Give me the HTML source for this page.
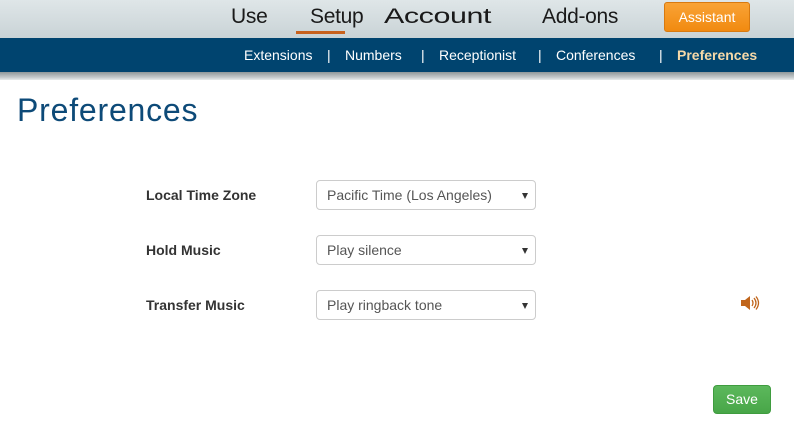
<!DOCTYPE html>
<html><head><meta charset="utf-8"><style>
*{margin:0;padding:0;box-sizing:border-box}
body{width:794px;height:434px;overflow:hidden;background:#fff;font-family:"Liberation Sans",sans-serif;position:relative}
.top{position:absolute;left:0;top:0;width:794px;height:38px;background:linear-gradient(#dfe6e8,#c9d3d6)}
.top a{position:absolute;top:5px;font-size:21px;color:#1a1a1a;text-decoration:none;letter-spacing:-0.3px}
.ul{position:absolute;left:296px;top:31px;width:49px;height:3px;background:#c8621e}
.btn{position:absolute;left:664px;top:2px;width:86px;height:30px;background:linear-gradient(#f9a336,#f18a10);border:1px solid #d87a10;border-radius:3px;color:#fff;font-size:14px;text-align:center;line-height:28px}
.nav{position:absolute;left:0;top:38px;width:794px;height:34px;background:#00446f}
.nav span{position:absolute;top:9px;font-size:14px;color:#fff}
.sh{position:absolute;left:0;top:72px;width:794px;height:8px;background:linear-gradient(#8e9799,#c7cdcf 70%,#e8ecec)}
h1{position:absolute;left:17px;top:92px;font-weight:normal;font-size:32px;color:#0d4a78;letter-spacing:0.8px}
.lb{position:absolute;left:146px;font-size:14px;font-weight:bold;color:#333}
.sel{position:absolute;left:316px;width:220px;height:30px;border:1px solid #ccc;border-radius:4px;font-size:14px;color:#555;padding:6px 10px}
.sel:after{content:"";position:absolute;right:7px;top:12px;border-left:3px solid transparent;border-right:3px solid transparent;border-top:6px solid #333}
.save{position:absolute;left:713px;top:385px;width:58px;height:29px;background:linear-gradient(#5cb85c,#48a648);border:1px solid #3f9c3f;border-radius:4px;color:#fff;font-size:14px;text-align:center;line-height:27px}
</style></head><body>
<div class="top">
<a style="left:231px">Use</a><a style="left:310px">Setup</a><a style="left:384px;transform:scaleX(1.45);transform-origin:left">Account</a><a style="left:542px">Add-ons</a>
<div class="ul"></div><div class="btn">Assistant</div>
</div>
<div class="nav">
<span style="left:244px">Extensions</span><span style="left:327px">|</span>
<span style="left:345px">Numbers</span><span style="left:421px">|</span>
<span style="left:439px">Receptionist</span><span style="left:538px">|</span>
<span style="left:556px">Conferences</span><span style="left:659px">|</span>
<span style="left:677px;font-weight:bold;color:#f6d9a8">Preferences</span>
</div>
<div class="sh"></div>
<h1>Preferences</h1>
<div class="lb" style="top:187px">Local Time Zone</div>
<div class="sel" style="top:180px">Pacific Time (Los Angeles)</div>
<div class="lb" style="top:242px">Hold Music</div>
<div class="sel" style="top:235px">Play silence</div>
<div class="lb" style="top:297px">Transfer Music</div>
<div class="sel" style="top:290px">Play ringback tone</div>
<svg style="position:absolute;left:740px;top:295px" width="20" height="16" viewBox="0 0 20 16">
<path d="M1 5h4l5-4v14l-5-4H1z" fill="#c0651c"/>
<path d="M12 5q2 3 0 6M14 3q4 5 0 10M16 1.5q5 6.5 0 13" stroke="#c0651c" stroke-width="1.3" fill="none"/>
</svg>
<div class="save">Save</div>
</body></html>
